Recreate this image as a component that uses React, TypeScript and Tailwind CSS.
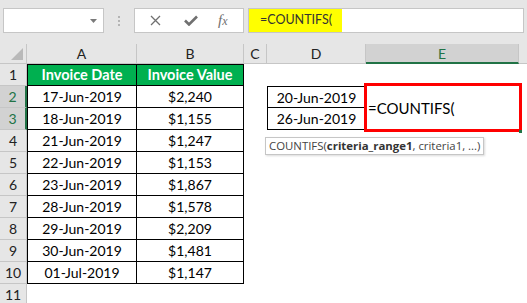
import React from "react";

const rows = [
  ["17-Jun-2019", "$2,240"],
  ["18-Jun-2019", "$1,155"],
  ["21-Jun-2019", "$1,247"],
  ["22-Jun-2019", "$1,153"],
  ["23-Jun-2019", "$1,867"],
  ["28-Jun-2019", "$1,578"],
  ["29-Jun-2019", "$2,209"],
  ["30-Jun-2019", "$1,481"],
  ["01-Jul-2019", "$1,147"],
];

function FormulaBar() {
  return (
    <div className="flex h-[44px] items-start bg-[#e6e6e6] pt-[8px]">
      <div className="ml-[3px] flex h-[25px] w-[101px] items-center justify-end border border-[#c6c6c6] bg-white pr-[6px]">
        <svg width="7" height="4" viewBox="0 0 7 4">
          <path d="M0 0h7L3.5 4z" fill="#7a7a7a" />
        </svg>
      </div>
      <div className="ml-[14px] mt-[8px] flex flex-col gap-[2px]">
        <span className="h-[2px] w-[2px] bg-[#b4b4b4]" />
        <span className="h-[2px] w-[2px] bg-[#b4b4b4]" />
        <span className="h-[2px] w-[2px] bg-[#b4b4b4]" />
      </div>
      <div className="ml-[14px] flex h-[25px] w-[110px] items-center border border-[#c6c6c6] bg-white">
        <svg className="ml-[15px]" width="11" height="11" viewBox="0 0 11 11">
          <path d="M1 1l9 9M10 1l-9 9" stroke="#707070" strokeWidth="1.3" fill="none" />
        </svg>
        <svg className="ml-[23px]" width="14" height="11" viewBox="0 0 14 11">
          <path d="M1 5.5l4 4L13 1.5" stroke="#707070" strokeWidth="2.6" fill="none" />
        </svg>
        <span className="ml-[20px] font-['Liberation_Serif',serif] text-[15px] italic leading-none text-[#707070]">
          f<span className="text-[12px]">x</span>
        </span>
      </div>
      <div className="ml-[4px] flex h-[25px] w-[276px] items-stretch border border-[#c6c6c6] bg-white">
        <div className="flex w-[93px] items-center bg-[#ffff00] pl-[11px] text-[12.5px] text-[#333]">
          =COUNTIFS(
        </div>
      </div>
    </div>
  );
}

function ColHeader({ label, selected }: { label: string; selected?: boolean }) {
  return (
    <div
      className={
        selected
          ? "flex items-center justify-center border-b-2 border-r border-b-[#217346] border-r-[#c6c6c6] bg-[#d2d2d2] text-[#217346]"
          : "flex items-center justify-center border-b border-r border-[#c6c6c6] bg-[#e6e6e6] text-[#222]"
      }
    >
      {label}
    </div>
  );
}

function RowHeader({ n, selected }: { n: number; selected?: boolean }) {
  return (
    <div
      className={
        selected
          ? "flex items-center justify-center border-b border-r-2 border-b-[#c6c6c6] border-r-[#217346] bg-[#d2d2d2] text-[#217346]"
          : "flex items-center justify-center border-b border-r border-[#c6c6c6] bg-[#e6e6e6] text-[#222]"
      }
    >
      {n}
    </div>
  );
}

export default function App() {
  return (
    <div className="h-[303px] w-[527px] overflow-hidden bg-white font-['Lato',sans-serif] text-[14px] text-black">
      <FormulaBar />
      <div className="grid grid-cols-[27px_110px_107px_23px_99px_153px_8px] grid-rows-[20px_repeat(11,22px)]">
        {/* header row */}
        <div className="flex items-end justify-end border-b border-r border-[#c6c6c6] bg-[#e6e6e6] p-[3px]">
          <svg width="12" height="12" viewBox="0 0 12 12">
            <path d="M12 0v12H0z" fill="#b9b9b9" />
          </svg>
        </div>
        <ColHeader label="A" />
        <ColHeader label="B" />
        <ColHeader label="C" />
        <ColHeader label="D" />
        <ColHeader label="E" selected />
        <div className="border-b border-[#c6c6c6] bg-[#e6e6e6]" />

        {/* row 1 */}
        <RowHeader n={1} />
        <div className="flex items-center justify-center border border-black bg-[#00b050] text-[14.5px] font-bold text-white">
          Invoice Date
        </div>
        <div className="flex items-center justify-center border-y border-r border-black bg-[#00b050] text-[14.5px] font-bold text-white">
          Invoice Value
        </div>
        <div />
        <div />
        <div />
        <div />

        {rows.map(([d, v], i) => {
          const n = i + 2;
          return (
            <React.Fragment key={n}>
              <RowHeader n={n} selected={n === 2 || n === 3} />
              <div className="flex items-center justify-center border-x border-b border-black">{d}</div>
              <div className="flex items-center justify-center border-b border-r border-black">{v}</div>
              <div />
              {n === 2 && (
                <div className="flex items-center justify-center border border-black">20-Jun-2019</div>
              )}
              {n === 3 && (
                <div className="flex items-center justify-center border-x border-b border-black">26-Jun-2019</div>
              )}
              {n > 3 && <div />}
              {n === 2 && (
                <div className="relative row-span-2 flex items-center pl-[2px] text-[15px]">
                  =COUNTIFS(
                  <div className="absolute -bottom-[2px] -left-[2px] -right-[3px] -top-[3px] border-[3px] border-[#ff0000]" />
                  <div className="absolute -bottom-[3px] -right-[3px] h-[3px] w-[3px] bg-[#217346]" />
                </div>
              )}
              {n > 3 && <div />}
              <div />
            </React.Fragment>
          );
        })}

        <RowHeader n={11} />
      </div>

      {/* function tooltip */}
      <div className="absolute left-[265px] top-[137px] flex h-[18px] items-center border border-[#c6c6c6] bg-white px-[3px] font-['Open_Sans',sans-serif] text-[11.4px] text-[#444] shadow-[1px_1px_2px_rgba(0,0,0,0.15)]">
        COUNTIFS(<span className="font-bold text-[#333]">criteria_range1</span>, criteria1, ...)
      </div>
    </div>
  );
}
